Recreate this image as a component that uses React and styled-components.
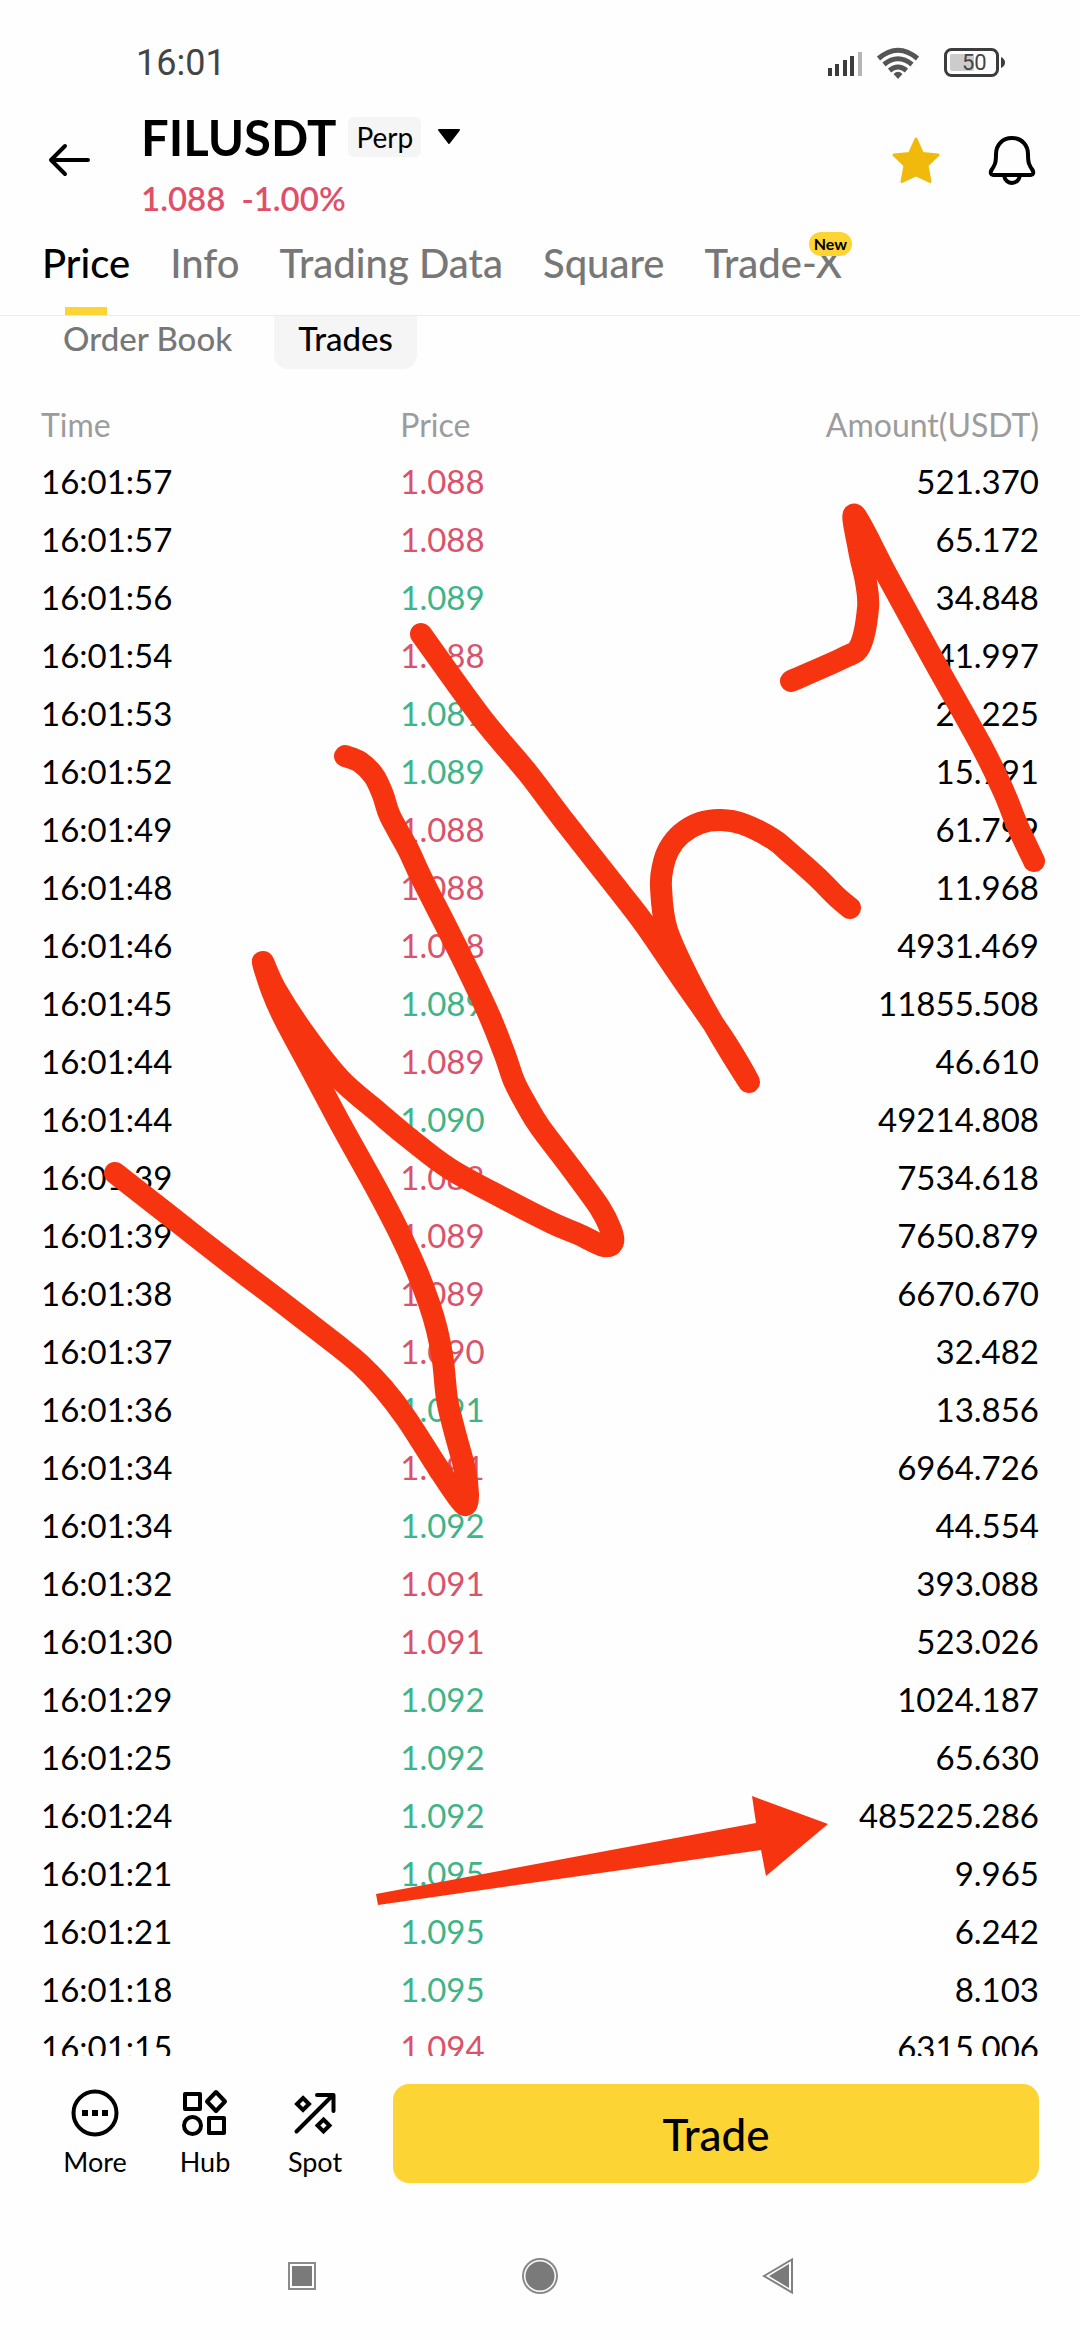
import React from 'react'
import styled, { createGlobalStyle } from 'styled-components'

const GlobalStyle = createGlobalStyle`
  * {
    box-sizing: border-box;
  }
  body {
    margin: 0;
    background: #fefefe;
    color: #000;
    font-family: Lato, 'Open Sans', sans-serif;
  }
  button {
    border: 0;
    padding: 0;
    background: none;
    color: inherit;
    font: inherit;
    cursor: pointer;
  }
  svg {
    display: block;
  }
`

const Screen = styled.div`
  position: relative;
  display: flex;
  flex-direction: column;
  height: 100vh;
  overflow: hidden;
`

const StatusBar = styled.div`
  display: flex;
  align-items: center;
  justify-content: space-between;
  height: 106px;
  padding: 20px 75px 0 136px;
  color: #444;
  font-family: Roboto, sans-serif;
  font-size: 36px;
`

const StatusIcons = styled.div`
  display: flex;
  align-items: center;
`

const Battery = styled.div`
  position: relative;
  margin-left: 24px;
`

const BatteryLevel = styled.span`
  position: absolute;
  top: 0;
  left: 18px;
  font-size: 22px;
  line-height: 30px;
`

const Header = styled.header`
  display: flex;
  align-items: flex-start;
  padding: 0 40px 0 42px;
`

const IconButton = styled.button`
  display: flex;
  align-items: center;
  justify-content: center;
  width: 56px;
  height: 108px;
`

const Pair = styled.div`
  flex: 1;
  padding-left: 43px;
`

const PairRow = styled.div`
  display: flex;
  align-items: center;
  height: 62px;
`

const PairName = styled.h1`
  margin: 0;
  font-size: 49px;
  font-weight: 700;
  line-height: 60px;
`

const Tag = styled.span`
  margin-left: 12px;
  padding: 0 8px;
  border-radius: 6px;
  background: #f5f5f5;
  font-size: 28px;
  line-height: 40px;
`

const Caret = styled.button`
  margin-left: 16px;
`

const PriceRow = styled.div`
  display: flex;
  gap: 16px;
  color: #e14e67;
  font-size: 33px;
  font-weight: 600;
  line-height: 60px;
`

const HeaderActions = styled.div`
  display: flex;
  gap: 40px;
`

const Tabs = styled.nav`
  display: flex;
  gap: 40px;
  height: 88px;
  padding: 0 42px;
  border-bottom: 1px solid #ebebeb;
`

const Tab = styled.button`
  position: relative;
  display: flex;
  flex-direction: column;
  align-items: center;
  justify-content: space-between;
  color: ${({ $active }) => ($active ? '#000' : '#777')};
  font-size: 40px;
  font-weight: 500;
  line-height: 70px;

  &::after {
    content: '';
    width: 42px;
    height: 8px;
    background: ${({ $active }) => ($active ? '#fcd535' : 'transparent')};
  }
`

const NewBadge = styled.span`
  position: absolute;
  top: 4px;
  right: -10px;
  padding: 0 5px;
  border-radius: 12px;
  background: #fcd535;
  color: #000;
  font-size: 16px;
  font-weight: 700;
  line-height: 24px;
`

const SubTabs = styled.div`
  display: flex;
  gap: 18px;
  padding: 0 39px;
  margin-bottom: 27px;
`

const SubTab = styled.button`
  padding: 0 24px 9px;
  border-radius: 0 0 14px 14px;
  background: ${({ $active }) => ($active ? '#f5f5f5' : 'transparent')};
  color: ${({ $active }) => ($active ? '#000' : '#777')};
  font-size: 33px;
  font-weight: 500;
  line-height: 44px;
`

const TradeList = styled.main`
  flex: 1;
  min-height: 0;
  overflow: hidden;
  padding: 0 41px;
`

const TradeTable = styled.table`
  width: 100%;
  table-layout: fixed;
  border-collapse: collapse;
  font-size: 33px;
`

const HeadCell = styled.th`
  width: ${({ $width }) => $width};
  height: 56px;
  padding: 0;
  color: #9c9c9c;
  font-size: 32px;
  font-weight: 400;
  text-align: ${({ $align }) => $align || 'left'};
`

const Cell = styled.td`
  height: 58px;
  padding: 0;
  color: ${({ $color }) => $color || '#000'};
  text-align: ${({ $align }) => $align || 'left'};
`

const BottomBar = styled.footer`
  display: flex;
  padding: 28px 41px 29px 40px;
`

const Action = styled.button`
  display: flex;
  flex-direction: column;
  align-items: center;
  gap: 7px;
  width: 110px;
  padding-top: 5px;
  font-size: 27px;
  line-height: 36px;
`

const TradeButton = styled.button`
  flex: 1;
  height: 99px;
  margin-left: 23px;
  border-radius: 16px;
  background: #fcd535;
  font-size: 44px;
  font-weight: 500;
`

const SystemNav = styled.div`
  display: flex;
  align-items: center;
  justify-content: center;
  gap: 200px;
  height: 128px;
`

const SystemButton = styled.button`
  display: flex;
  justify-content: center;
  width: 38px;
`

const Ink = styled.svg`
  position: absolute;
  top: 0;
  left: 0;
  width: 100%;
  height: 100%;
  pointer-events: none;
`

const RED = '#d9536c'
const GREEN = '#3fb488'

const trades = [
  ['16:01:57', '1.088', '521.370', RED],
  ['16:01:57', '1.088', '65.172', RED],
  ['16:01:56', '1.089', '34.848', GREEN],
  ['16:01:54', '1.088', '41.997', RED],
  ['16:01:53', '1.089', '21.225', GREEN],
  ['16:01:52', '1.089', '15.791', GREEN],
  ['16:01:49', '1.088', '61.799', RED],
  ['16:01:48', '1.088', '11.968', RED],
  ['16:01:46', '1.088', '4931.469', RED],
  ['16:01:45', '1.089', '11855.508', GREEN],
  ['16:01:44', '1.089', '46.610', RED],
  ['16:01:44', '1.090', '49214.808', GREEN],
  ['16:01:39', '1.088', '7534.618', RED],
  ['16:01:39', '1.089', '7650.879', RED],
  ['16:01:38', '1.089', '6670.670', RED],
  ['16:01:37', '1.090', '32.482', RED],
  ['16:01:36', '1.091', '13.856', GREEN],
  ['16:01:34', '1.091', '6964.726', RED],
  ['16:01:34', '1.092', '44.554', GREEN],
  ['16:01:32', '1.091', '393.088', RED],
  ['16:01:30', '1.091', '523.026', RED],
  ['16:01:29', '1.092', '1024.187', GREEN],
  ['16:01:25', '1.092', '65.630', GREEN],
  ['16:01:24', '1.092', '485225.286', GREEN],
  ['16:01:21', '1.095', '9.965', GREEN],
  ['16:01:21', '1.095', '6.242', GREEN],
  ['16:01:18', '1.095', '8.103', GREEN],
  ['16:01:15', '1.094', '6315.006', RED],
]

const tabs = ['Price', 'Info', 'Trading Data', 'Square', 'Trade-X']

// pen strokes drawn over the list
const strokes = [
  [
    [115, 1173], [170, 1216], [230, 1263], [284, 1304], [337, 1345], [360, 1364],
    [383, 1388], [406, 1418], [433, 1460], [448, 1483], [460, 1500], [466, 1505],
    [468, 1494], [465, 1470], [454, 1429], [447, 1399], [443, 1361], [437, 1330],
    [429, 1303], [416, 1269], [398, 1230], [375, 1186], [341, 1125], [315, 1076],
    [284, 1018], [272, 991], [263, 962], [276, 990], [306, 1036], [340, 1079],
    [378, 1112], [409, 1138], [450, 1169], [505, 1199], [552, 1223], [578, 1234],
    [604, 1246], [613, 1242], [611, 1230], [600, 1208], [571, 1168], [540, 1127],
    [526, 1104], [514, 1081], [505, 1055], [490, 1017], [468, 970], [447, 928],
    [421, 877], [408, 849], [390, 816], [383, 795], [374, 776], [360, 762],
    [345, 756],
  ],
  [
    [421, 634], [481, 717], [527, 772], [565, 822], [620, 892], [646, 926],
    [680, 976], [725, 1041], [749, 1082], [724, 1042], [693, 987], [667, 930],
    [661, 887], [663, 866], [669, 849], [681, 834], [700, 823], [721, 820],
    [743, 824], [773, 839], [790, 853], [817, 877], [837, 897], [850, 908],
  ],
  [
    [791, 681], [843, 658], [860, 646], [868, 608], [866, 582], [859, 550],
    [855, 515], [888, 577], [934, 661], [981, 745], [1003, 790], [1018, 827],
    [1034, 861],
  ],
]

const smooth = (pts) =>
  pts.reduce((d, p, i) => {
    if (i === 0) return `M${p[0]} ${p[1]}`
    const a = pts[i - 2] || pts[0]
    const b = pts[i - 1]
    const c = pts[i + 1] || p
    const x1 = b[0] + (p[0] - a[0]) / 6
    const y1 = b[1] + (p[1] - a[1]) / 6
    const x2 = p[0] - (c[0] - b[0]) / 6
    const y2 = p[1] - (c[1] - b[1]) / 6
    return `${d} C${x1} ${y1} ${x2} ${y2} ${p[0]} ${p[1]}`
  }, '')

const SignalIcon = () => (
  <svg width='36' height='30' viewBox='0 0 36 30' fill='#3c3c3c'>
    <rect x='1' y='20' width='4' height='8' />
    <rect x='8' y='16' width='4' height='12' />
    <rect x='16' y='12' width='4' height='16' />
    <rect x='23' y='8' width='4' height='20' />
    <rect x='31' y='4' width='4' height='24' fill='#b5b5b5' />
  </svg>
)

const Wifi = styled.svg`
  margin-left: 13px;
`

const WifiIcon = () => (
  <Wifi width='44' height='32' viewBox='0 0 44 32' fill='none' stroke='#555' strokeWidth='5'>
    <path d='M2.500 11.500Q22 -5 41.500 11.500' />
    <path d='M8 17.500Q22 6 36 17.500' />
    <path d='M13.500 23.500Q22 16.500 30.500 23.500' />
    <path d='M22 32l-4.500-5Q22 22.500 26.500 27Z' fill='#555' stroke='none' />
  </Wifi>
)

const BatteryIcon = () => (
  <svg width='61' height='30' viewBox='0 0 61 30'>
    <rect x='6' y='6' width='24' height='17' rx='2' fill='#ccc' />
    <rect x='1.500' y='1.500' width='52' height='26' rx='6' fill='none' stroke='#3c3c3c' strokeWidth='3' />
    <path d='M57 9Q61 11 61 14.500T57 20Z' fill='#3c3c3c' />
  </svg>
)

const BackIcon = () => (
  <svg
    width='44'
    height='36'
    viewBox='0 0 44 36'
    fill='none'
    stroke='#000'
    strokeWidth='4'
    strokeLinecap='round'
    strokeLinejoin='round'
  >
    <path d='M40 18H3M17 4L3 18l14 14' />
  </svg>
)

const StarIcon = () => (
  <svg width='48' height='48' viewBox='0 0 48 48' fill='#f0b90b' stroke='#f0b90b' strokeWidth='3' strokeLinejoin='round'>
    <path d='M24 3L30.500 17.500L46 19L35 29.500L38 45.500L24 39L10 45.500L13 29.500L2 19L17.500 17.500Z' />
  </svg>
)

const BellIcon = () => (
  <svg width='48' height='50' viewBox='0 0 48 50' fill='none' stroke='#000' strokeWidth='4' strokeLinejoin='round'>
    <path d='M24 3C14 3 8 10.500 8 19C8 28 7 30 3.500 35C2 38 3 40 5 40H43C45 40 46 38 44.500 35C41 30 40 28 40 19C40 10.500 34 3 24 3Z' />
    <path d='M16 40.500C17 45.500 20.500 48 24 48C27.500 48 31 45.500 32 40.500' />
  </svg>
)

const MoreIcon = () => (
  <svg width='48' height='48' viewBox='0 0 48 48'>
    <circle cx='24' cy='24' r='21.500' fill='none' stroke='#000' strokeWidth='4' />
    <path d='M11 21h6v6h-6zM21 21h6v6h-6zM31 21h6v6h-6z' />
  </svg>
)

const HubIcon = () => (
  <svg width='48' height='48' viewBox='0 0 48 48' fill='none' stroke='#000' strokeWidth='4' strokeLinejoin='round'>
    <rect x='4' y='5' width='15' height='15' />
    <path d='M35 3l9 9.500l-9 9.500l-9-9.500z' />
    <circle cx='11.500' cy='36.500' r='8.500' />
    <rect x='28' y='29' width='15' height='15' />
  </svg>
)

const SpotIcon = () => (
  <svg
    width='48'
    height='48'
    viewBox='0 0 48 48'
    fill='none'
    stroke='#000'
    strokeWidth='4'
    strokeLinecap='round'
    strokeLinejoin='round'
  >
    <path d='M5.500 42.500L42 6M26 6H42.500V22' />
    <path d='M12 9l6 6l-6 6l-6-6zM32.500 30.500l6 6l-6 6l-6-6z' strokeLinejoin='miter' />
  </svg>
)

const App = () => {
  return (
    <Screen>
      <GlobalStyle />
      <StatusBar>
        <span>16:01</span>
        <StatusIcons>
          <SignalIcon />
          <WifiIcon />
          <Battery>
            <BatteryIcon />
            <BatteryLevel>50</BatteryLevel>
          </Battery>
        </StatusIcons>
      </StatusBar>

      <Header>
        <IconButton aria-label='Back'>
          <BackIcon />
        </IconButton>
        <Pair>
          <PairRow>
            <PairName>FILUSDT</PairName>
            <Tag>Perp</Tag>
            <Caret aria-label='Change pair'>
              <svg width='24' height='16' viewBox='0 0 24 16'>
                <path d='M2 1H22L12 14Z' stroke='#000' strokeWidth='2' strokeLinejoin='round' />
              </svg>
            </Caret>
          </PairRow>
          <PriceRow>
            <span>1.088</span>
            <span>-1.00%</span>
          </PriceRow>
        </Pair>
        <HeaderActions>
          <IconButton aria-label='Favourite'>
            <StarIcon />
          </IconButton>
          <IconButton aria-label='Alerts'>
            <BellIcon />
          </IconButton>
        </HeaderActions>
      </Header>

      <Tabs>
        {tabs.map((name, i) => (
          <Tab key={name} $active={i === 0}>
            {name}
            {name === 'Trade-X' && <NewBadge>New</NewBadge>}
          </Tab>
        ))}
      </Tabs>

      <SubTabs>
        <SubTab>Order Book</SubTab>
        <SubTab $active>Trades</SubTab>
      </SubTabs>

      <TradeList>
        <TradeTable>
          <thead>
            <tr>
              <HeadCell $width='36%'>Time</HeadCell>
              <HeadCell $width='28%'>Price</HeadCell>
              <HeadCell $width='36%' $align='right'>Amount(USDT)</HeadCell>
            </tr>
          </thead>
          <tbody>
            {trades.map(([time, price, amount, color], i) => (
              <tr key={i}>
                <Cell>{time}</Cell>
                <Cell $color={color}>{price}</Cell>
                <Cell $align='right'>{amount}</Cell>
              </tr>
            ))}
          </tbody>
        </TradeTable>
      </TradeList>

      <BottomBar>
        <Action>
          <MoreIcon />
          More
        </Action>
        <Action>
          <HubIcon />
          Hub
        </Action>
        <Action>
          <SpotIcon />
          Spot
        </Action>
        <TradeButton>Trade</TradeButton>
      </BottomBar>

      <SystemNav>
        <SystemButton aria-label='Recent apps'>
          <svg width='28' height='28' viewBox='0 0 28 28' fill='#7a7a7a'>
            <rect x='1' y='1' width='26' height='26' fill='none' stroke='#8a8a8a' strokeWidth='2' />
            <rect x='4' y='4' width='20' height='20' />
          </svg>
        </SystemButton>
        <SystemButton aria-label='Home'>
          <svg width='38' height='38' viewBox='0 0 38 38' fill='#7a7a7a'>
            <circle cx='19' cy='19' r='17' fill='none' stroke='#8a8a8a' strokeWidth='2' />
            <circle cx='19' cy='19' r='14.500' />
          </svg>
        </SystemButton>
        <SystemButton aria-label='System back'>
          <svg width='32' height='38' viewBox='0 0 32 38' fill='#7a7a7a'>
            <path d='M2 19L30 2.500V35.500Z' fill='none' stroke='#808080' strokeWidth='2' />
            <path d='M7 19L27 7V31Z' />
          </svg>
        </SystemButton>
      </SystemNav>

      <Ink viewBox='0 0 1080 2340' aria-hidden='true'>
        <g fill='none' stroke='#f63410' strokeWidth='22' strokeLinecap='round' strokeLinejoin='round'>
          {strokes.map((pts, i) => (
            <path key={i} d={smooth(pts)} />
          ))}
        </g>
        <path d='M376 1894L756 1823L752 1796L828 1824L766 1876L761 1850L378 1905Z' fill='#f63410' />
      </Ink>
    </Screen>
  )
}

export default App
